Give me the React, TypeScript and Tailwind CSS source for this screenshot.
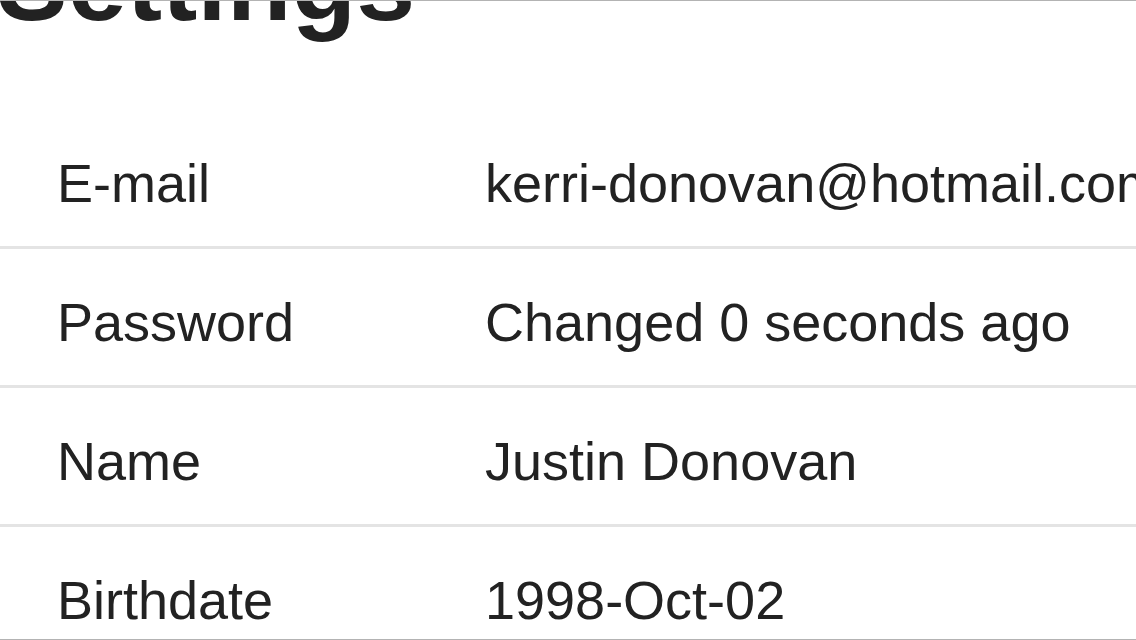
const rows = [
  { label: 'E-mail', value: 'kerri-donovan@hotmail.com' },
  { label: 'Password', value: 'Changed 0 seconds ago' },
  { label: 'Name', value: 'Justin Donovan' },
  { label: 'Birthdate', value: '1998-Oct-02' },
];

export default function App() {
  return (
    <div className="h-[640px] w-[1136px] overflow-hidden bg-white border-y border-[#b3b3b3] text-[#222222] font-['Liberation_Sans',Arial,sans-serif]">
      <h1 className="-mt-[71px] -ml-[3px] text-[106px] leading-none font-bold whitespace-nowrap">
        Settings
      </h1>

      <div className="mt-[74px] flex flex-col">
        {rows.map((row, i) => (
          <div
            key={row.label}
            className={
              i < rows.length - 1
                ? 'flex h-[139px] shrink-0 border-b-[3px] border-[#e4e4e4] pl-[57px] pt-[46px] text-[54px] leading-none whitespace-nowrap'
                : 'flex h-[139px] shrink-0 pl-[57px] pt-[46px] text-[54px] leading-none whitespace-nowrap'
            }
          >
            <div className="w-[428px] shrink-0">{row.label}</div>
            <div>{row.value}</div>
          </div>
        ))}
      </div>
    </div>
  );
}
